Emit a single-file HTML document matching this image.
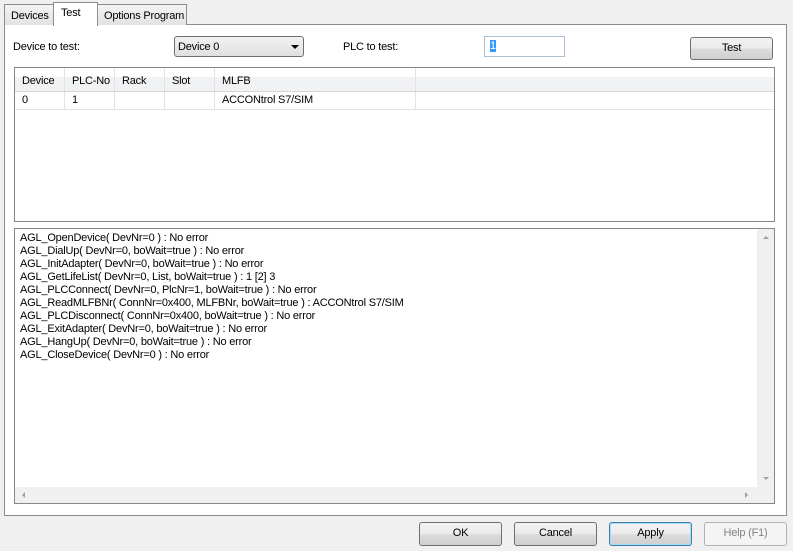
<!DOCTYPE html>
<html><head><style>
*{margin:0;padding:0;box-sizing:border-box}
body{width:793px;height:551px;background:#f0f0f0;font-family:"Liberation Sans",sans-serif;font-size:11px;letter-spacing:-0.2px;color:#000;position:relative;overflow:hidden}
.a{position:absolute}
.tab{position:absolute;border:1px solid #898c95;border-bottom:none;background:linear-gradient(#f4f4f4,#e2e2e2);padding:5px 0 0 6px;height:21px;white-space:nowrap}
.btn{position:absolute;border:1px solid #707070;border-radius:3px;background:linear-gradient(#f2f2f2 0,#ebebeb 50%,#dddddd 50%,#cfcfcf);text-align:center;line-height:21px;font-size:11px}
.log .l{height:13px;line-height:13px;white-space:nowrap}
.hd{position:absolute;top:0;height:23px;line-height:26px;padding-left:7px;border-right:1px solid #e3e3e3}
.rw{position:absolute;top:24px;height:17px;line-height:17px;padding-left:7px;border-right:1px solid #e3e3e3}
.ar{position:absolute;width:0;height:0}
</style></head><body>
<div class="a" style="left:4px;top:24px;width:783px;height:492px;background:#fff;border:1px solid #898c95"></div>
<div class="tab" style="left:4px;top:4px;width:50px">Devices</div>
<div class="tab" style="left:97px;top:4px;width:90px">Options Program</div>
<div class="a" style="left:53px;top:2px;width:45px;height:24px;background:#fff;border:1px solid #898c95;border-bottom:none;padding:4px 0 0 7px">Test</div>

<div class="a" style="left:13px;top:41px">Device to test:</div>
<div class="a" style="left:174px;top:36px;width:130px;height:21px;border:1px solid #707070;border-radius:3px;background:linear-gradient(#f2f2f2,#e0e0e0);padding:4px 0 0 3px">Device 0<span class="ar" style="left:116px;top:8px;border-left:4px solid transparent;border-right:4px solid transparent;border-top:4px solid #000"></span></div>
<div class="a" style="left:343px;top:41px">PLC to test:</div>
<div class="a" style="left:484px;top:36px;width:81px;height:21px;border:1px solid #abc0d8;background:#fff;padding:3px 0 0 5px"><span style="background:#3399ff;color:#fff">1</span></div>
<div class="btn" style="left:690px;top:37px;width:83px;height:23px">Test</div>

<div class="a" style="left:14px;top:67px;width:761px;height:155px;border:1px solid #828790;background:#fff">
 <div class="a" style="left:0;top:0;width:759px;height:24px;background:linear-gradient(#fff 0,#fff 40%,#f1f2f4 40%,#f1f2f4);border-bottom:1px solid #d5d5d5"></div>
 <div class="hd" style="left:0;width:50px">Device</div>
 <div class="hd" style="left:50px;width:50px">PLC-No</div>
 <div class="hd" style="left:100px;width:50px">Rack</div>
 <div class="hd" style="left:150px;width:50px">Slot</div>
 <div class="hd" style="left:200px;width:201px">MLFB</div>
 <div class="a" style="left:0;top:41px;width:759px;height:1px;background:#e3e3e3"></div>
 <div class="rw" style="left:0;width:50px">0</div>
 <div class="rw" style="left:50px;width:50px">1</div>
 <div class="rw" style="left:100px;width:50px"></div>
 <div class="rw" style="left:150px;width:50px"></div>
 <div class="rw" style="left:200px;width:201px">ACCONtrol S7/SIM</div>
</div>

<div class="a log" style="left:14px;top:228px;width:761px;height:276px;border:1px solid #828790;background:#fff;padding:3px 0 0 5px">
<div class="l">AGL_OpenDevice( DevNr=0 ) : No error</div>
<div class="l">AGL_DialUp( DevNr=0, boWait=true ) : No error</div>
<div class="l">AGL_InitAdapter( DevNr=0, boWait=true ) : No error</div>
<div class="l">AGL_GetLifeList( DevNr=0, List, boWait=true ) : 1 [2] 3</div>
<div class="l">AGL_PLCConnect( DevNr=0, PlcNr=1, boWait=true ) : No error</div>
<div class="l">AGL_ReadMLFBNr( ConnNr=0x400, MLFBNr, boWait=true ) : ACCONtrol S7/SIM</div>
<div class="l">AGL_PLCDisconnect( ConnNr=0x400, boWait=true ) : No error</div>
<div class="l">AGL_ExitAdapter( DevNr=0, boWait=true ) : No error</div>
<div class="l">AGL_HangUp( DevNr=0, boWait=true ) : No error</div>
<div class="l">AGL_CloseDevice( DevNr=0 ) : No error</div>
<div class="a" style="left:742px;top:0;width:17px;height:258px;background:#f0f0f0"></div>
<div class="a" style="left:0;top:258px;width:759px;height:16px;background:#f0f0f0"></div>
<div class="ar" style="left:748px;top:7px;border-left:3px solid transparent;border-right:3px solid transparent;border-bottom:3px solid #a0a0a0"></div>
<div class="ar" style="left:748px;top:248px;border-left:3px solid transparent;border-right:3px solid transparent;border-top:3px solid #a0a0a0"></div>
<div class="ar" style="left:7px;top:263px;border-top:3px solid transparent;border-bottom:3px solid transparent;border-right:3px solid #a0a0a0"></div>
<div class="ar" style="left:730px;top:263px;border-top:3px solid transparent;border-bottom:3px solid transparent;border-left:3px solid #a0a0a0"></div>
</div>

<div class="btn" style="left:419px;top:522px;width:83px;height:24px">OK</div>
<div class="btn" style="left:514px;top:522px;width:83px;height:24px">Cancel</div>
<div class="btn" style="left:609px;top:522px;width:83px;height:24px;border-color:#3c7fb1;box-shadow:inset 0 0 0 1px #a8dcf5">Apply</div>
<div class="btn" style="left:704px;top:522px;width:83px;height:24px;background:#f4f4f4;border-color:#adb2b5;color:#838383">Help (F1)</div>
</body></html>
